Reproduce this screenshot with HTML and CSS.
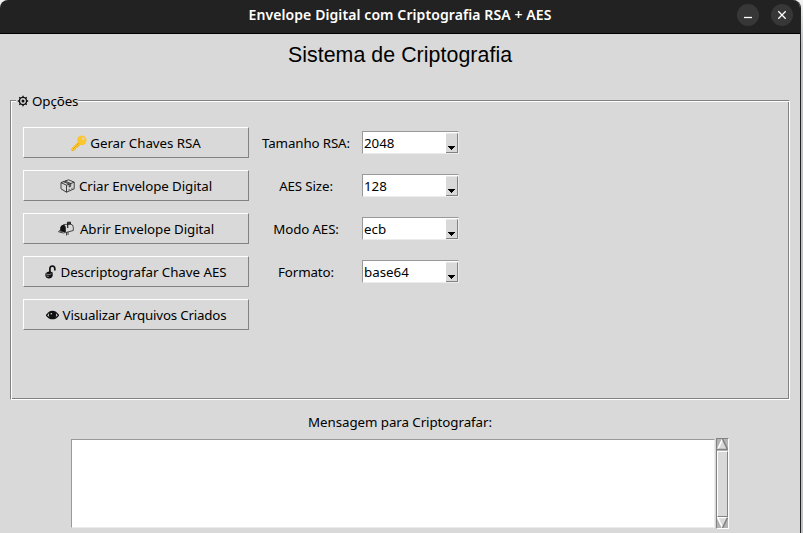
FILE: index.html
```
<!DOCTYPE html>
<html lang="pt-BR">
<head>
<meta charset="utf-8">
<title>Envelope Digital com Criptografia RSA + AES</title>
<link rel="stylesheet" href="styles.css">
</head>
<body>
<div class="window">
  <header class="titlebar">
    <span class="side"></span>
    <span class="caption">Envelope Digital com Criptografia RSA + AES</span>
    <span class="side controls">
      <svg class="ctl" viewBox="0 0 22 22"><circle cx="11" cy="11" r="11"/><path d="M7 13.5h8"/></svg>
      <svg class="ctl" viewBox="0 0 22 22"><circle cx="11" cy="11" r="11"/><path d="M7.300 7.300l7.400 7.400M14.700 7.300l-7.400 7.400"/></svg>
    </span>
  </header>
  <main>
    <h1>Sistema de Criptografia</h1>
    <section class="group">
      <div class="legend">
        <svg class="gear" viewBox="0 0 12 12"><circle cx="6" cy="6" r="3.600"/><circle cx="6" cy="6" r=".8"/><path d="M6 .8v2M6 9.200v2M.8 6h2M9.200 6h2M2.300 2.300l1.400 1.400M8.300 8.300l1.400 1.400M9.700 2.300L8.300 3.700M3.700 8.300L2.300 9.700"/></svg>
        <span class="t-opt">Opções</span>
      </div>
      <div class="options">
        <div class="buttons">
          <button class="btn"><svg class="i-key" viewBox="0 0 16 16"><path fill="#e9a820" d="M8 7l2 2-4 4-1 0v1.500H3.200V16H.5v-2.500z"/><path fill="#fcc62d" fill-rule="evenodd" d="M7 2.200Q9-.2 12 .7 15.800 2 15.400 6 14.800 9.700 11 10.200 9.800 10.300 8.700 9.600L3 15.300H.8V13L6.800 7Q5.300 4.500 7 2.200zM11.500 2.500Q10.500 3.300 11.300 4.200L12.300 5Q13.500 5.200 13.500 4 13 2.500 11.500 2.500z"/><path fill="none" stroke="#df9519" stroke-width=".8" d="M2 14l6-6"/></svg><span class="t1">Gerar Chaves RSA</span></button>
          <button class="btn"><svg class="i-box" viewBox="0 0 15 14"><path fill="none" stroke="#222" stroke-width=".85" stroke-linejoin="round" d="M1 3.600L8.500.8l5.700 2.400v6.600L6.500 13.200 1 9.800zM1 3.600l5.500 2.600 7.700-3M6.500 6.200v7M3.500 2.700L9.200 5v3l1.500-.6V4.500L5 2.100"/><path fill="none" stroke="#444" stroke-width=".6" d="M8 11l2-.8M11 9.800l1.800-.7"/></svg><span class="t2">Criar Envelope Digital</span></button>
          <button class="btn"><svg class="i-mail" viewBox="0 0 16 15"><path fill="#111" d="M2.200 10.500V6.500Q3 3.700 5.500 3.800 8 4.300 7.800 8v3.300z"/><path fill="none" stroke="#222" stroke-width=".8" d="M5.300 3.600L12.500 3Q15.300 3.500 15.300 6.500V9.500L8 11.500M.5 10.800l2-2.200M.5 10.800l5 1.200 2.300-.7M8.500 11.500v3M10 11v3"/><path fill="none" stroke="#111" stroke-width="1.100" d="M9.700 7V1.200h2.600v1.700H9.700"/></svg><span class="t3">Abrir Envelope Digital</span></button>
          <button class="btn"><svg class="i-lock" viewBox="0 0 11 14"><path fill="none" stroke="#111" stroke-width="1.700" d="M4.900 7.500V3.500Q5.200 1 7.300 1 9.800 1.200 9.800 3.500V5.500"/><path fill="#111" d="M.4 8.500Q2 6.500 5 6.300l2.700 1.300v3.400Q6.500 13.700 3.500 13.500.8 13 .4 11z"/><path fill="none" stroke="#d9d9d9" stroke-width=".6" d="M1 9l3 .8 2.500-1.100M1.500 11l2.200.6"/></svg><span class="t4">Descriptografar Chave AES</span></button>
          <button class="btn"><svg class="i-eye" viewBox="0 0 13 10"><path fill="none" stroke="#111" stroke-width="1.300" d="M.5 5.300Q3 1.300 6.500 1.300T12.500 5.300Q10 8.700 6.500 8.700T.5 5.300z"/><circle cx="6.500" cy="5" r="3.700" fill="#111"/><circle cx="5.300" cy="3.800" r=".8" fill="#ddd"/></svg><span class="t5">Visualizar Arquivos Criados</span></button>
        </div>
        <div class="fields">
          <label><span class="l1">Tamanho RSA:</span></label><div class="combo"><span>2048</span><i class="drop"><svg viewBox="0 0 7 4"><path d="M0 0h7v1H6v1H5v1H4v1H3V3H2V2H1V1H0z"/></svg></i></div>
          <label><span class="l2">AES Size:</span></label><div class="combo"><span>128</span><i class="drop"><svg viewBox="0 0 7 4"><path d="M0 0h7v1H6v1H5v1H4v1H3V3H2V2H1V1H0z"/></svg></i></div>
          <label><span class="l3">Modo AES:</span></label><div class="combo"><span>ecb</span><i class="drop"><svg viewBox="0 0 7 4"><path d="M0 0h7v1H6v1H5v1H4v1H3V3H2V2H1V1H0z"/></svg></i></div>
          <label><span class="l4">Formato:</span></label><div class="combo"><span>base64</span><i class="drop"><svg viewBox="0 0 7 4"><path d="M0 0h7v1H6v1H5v1H4v1H3V3H2V2H1V1H0z"/></svg></i></div>
        </div>
      </div>
    </section>
    <p class="msg"><span>Mensagem para Criptografar:</span></p>
    <div class="editor">
      <div class="text"></div>
      <div class="scroll">
        <svg viewBox="0 0 11 11"><path fill="#d9d9d9" d="M5.500 0L11 11H0z"/><path stroke="#fff" stroke-width="1.500" d="M5.500 0L.6 10.500"/><path stroke="#828282" stroke-width="1.500" d="M5.500 0l5 10.500H0"/></svg>
        <div class="thumb"></div>
        <svg viewBox="0 0 11 11"><path fill="#d9d9d9" d="M0 0h11L5.500 11z"/><path stroke="#fff" stroke-width="1.500" d="M11 .6H.6L5.500 11"/><path stroke="#828282" stroke-width="1.500" d="M10.500.6L5.500 11"/></svg>
      </div>
    </div>
  </main>
</div>
</body>
</html>
```
FILE: styles.css
```
* { box-sizing: border-box; }
html, body { margin: 0; height: 533px; overflow: hidden; }
body { background: linear-gradient(#f2f2f2, #bfc3c3 45px); font: 13.33px/18px "Noto Sans", sans-serif; color: #000; }
svg { display: block; flex: none; fill: none; }
.window { width: 801px; height: 533px; border-right: 1px solid #222; border-radius: 8px 8px 0 0; background: #d9d9d9; overflow: hidden; }
.titlebar { display: flex; height: 34px; padding: 4px 7px 8px; background: #222; border-bottom: 1px solid #000; color: #fff; align-items: center; }
.side { flex: 1; }
.controls { display: flex; justify-content: flex-end; gap: 12px; }
.ctl { width: 22px; height: 22px; }
.ctl circle { fill: #373737; }
.ctl path { stroke: #fff; stroke-width: 1.300; }
.caption { font-weight: 600; font-size: 14px; line-height: 22px; letter-spacing: .09px; white-space: nowrap; }
main { padding: 0 10px; }
h1 { margin: 0; padding-top: 9px; height: 66px; font: 21.33px/24px "Liberation Sans", sans-serif; letter-spacing: .06px; text-align: center; }
.group { height: 300px; border: 1px solid #828282; border-right-color: #fff; border-bottom-color: #fff; box-shadow: inset 1px 1px #fff, inset -1px -1px #828282; }
.legend { display: flex; align-items: center; width: 62px; height: 18px; margin: -9px 0 0 5px; padding-left: 1px; gap: 3px; background: #d9d9d9; letter-spacing: -.1px; white-space: nowrap; }
.gear { width: 12px; height: 12px; stroke: #111; stroke-width: 1.400; }
.options { display: flex; gap: 12px; padding: 17px 12px 0; }
.buttons { display: grid; grid-auto-rows: 31px; gap: 12px; width: 226px; }
.btn { display: flex; justify-content: center; align-items: center; padding: 0; font: inherit; color: inherit; background: #d9d9d9; border: 1px solid #fff; border-right-color: #828282; border-bottom-color: #828282; white-space: nowrap; }
.t1 { letter-spacing: -.06px; }
.t2 { letter-spacing: -.09px; }
.t3 { letter-spacing: -.07px; }
.t4 { letter-spacing: -.04px; }
.t5 { letter-spacing: -.19px; }
.i-key { width: 16px; height: 16px; margin-right: 3px; }
.i-box { width: 15px; height: 14px; margin-right: 4px; }
.i-mail { width: 16px; height: 15px; margin-right: 6px; }
.i-lock { width: 11px; height: 14px; margin-right: 4px; }
.i-eye { width: 13px; height: 10px; margin-right: 4px; }
.fields { display: grid; grid-template-columns: 90px 97px; grid-auto-rows: 31px; gap: 12px 11px; align-items: center; }
label { display: flex; justify-content: center; letter-spacing: -.13px; white-space: nowrap; }
.combo { display: flex; justify-content: space-between; height: 23px; padding: 1px 0 0 1px; line-height: 20px; background: #fff; border: 1px solid #999; border-right-color: #ececec; border-bottom-color: #ececec; }
.drop { display: flex; justify-content: center; align-items: flex-end; width: 12px; height: 20px; padding-bottom: 2px; background: #d9d9d9; border: 1px solid #e8e8e8; border-right-color: #828282; border-bottom-color: #828282; border-left: 0; }
.drop svg { width: 7px; height: 4px; fill: #000; }
.msg { margin: 13px 0 0; height: 25px; letter-spacing: -.07px; text-align: center; }
.editor { display: flex; gap: 1px; margin-left: 61px; }
.text { width: 644px; height: 89px; margin-top: 1px; background: #fff; border: 1px solid #999; border-right-color: #ececec; border-bottom-color: #ececec; }
.scroll { width: 13px; height: 91px; background: #b3b3b3; border: 1px solid #828282; border-right-color: #fff; border-bottom-color: #fff; }
.scroll svg { width: 11px; height: 11px; }
.thumb { height: 66px; margin: 1px 0 0; background: #d9d9d9; border: 1px solid #fff; border-right-color: #828282; border-bottom-color: #828282; }
```
